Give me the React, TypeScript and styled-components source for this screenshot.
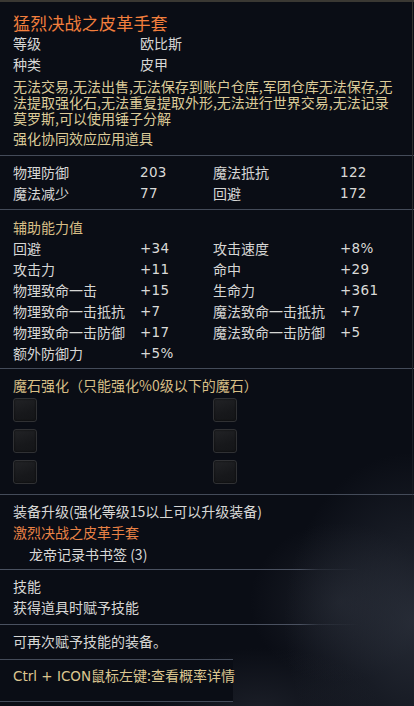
import React from "react";
import styled, { createGlobalStyle } from "styled-components";

const GlobalStyle = createGlobalStyle`
  html, body {
    margin: 0;
    padding: 0;
    background: #0b0e16;
  }
  body {
    width: 414px;
    height: 706px;
    overflow: hidden;
    font-family: "Noto Sans CJK SC", "DejaVu Sans", sans-serif;
    -webkit-font-smoothing: antialiased;
  }
`;

const Frame = styled.div`
  position: relative;
  width: 414px;
  height: 706px;
  box-sizing: border-box;
  border-top: 2px solid #3a3833;
  background:
    radial-gradient(ellipse 130px 170px at 414px 620px, rgba(56, 62, 74, 0.6), rgba(56, 62, 74, 0) 100%),
    radial-gradient(ellipse 90px 80px at 340px 600px, rgba(40, 44, 54, 0.55), rgba(40, 44, 54, 0) 100%),
    radial-gradient(ellipse 120px 60px at 260px 706px, rgba(42, 46, 56, 0.5), rgba(42, 46, 56, 0) 100%),
    #0a0d15;
  display: flex;
  flex-direction: column;
  overflow: hidden;
`;

const RightEdge = styled.div`
  position: absolute;
  top: 0;
  right: 1px;
  width: 1px;
  height: 560px;
  background: linear-gradient(#34332f, #22252c 70%, rgba(34, 37, 44, 0));
`;

const Section = styled.section<{ $pt: number; $pb: number }>`
  padding: ${(p) => p.$pt}px 13px ${(p) => p.$pb}px 13px;
  box-sizing: border-box;
  display: flex;
  flex-direction: column;
`;

const Divider = styled.div<{ $fade?: boolean }>`
  height: 1px;
  flex: none;
  width: 100%;
  background: ${(p) =>
    p.$fade
      ? "linear-gradient(90deg, #4a5160 0px, #4a5160 300px, rgba(74,81,96,0.35) 318px, rgba(74,81,96,0) 360px)"
      : "#444b59"};
`;

const Title = styled.div`
  font-size: 17px;
  line-height: 21px;
  color: #f27f3d;
  letter-spacing: 0.2px;
  white-space: nowrap;
`;

const Line = styled.div<{ $color?: string; $indent?: number; $mt?: number }>`
  font-size: 14px;
  line-height: 21px;
  color: ${(p) => p.$color || "#d7d7d5"};
  padding-left: ${(p) => p.$indent || 0}px;
  margin-top: ${(p) => p.$mt || 0}px;
  white-space: nowrap;
`;

const DescBlock = styled.div`
  margin-top: 3px;
  display: flex;
  flex-direction: column;
`;

const Desc = styled.div`
  font-size: 14px;
  line-height: 16px;
  color: #dccb98;
  white-space: nowrap;
`;

const InfoGrid = styled.div`
  display: grid;
  grid-template-columns: 127px 1fr;
  font-size: 14px;
  line-height: 21px;
  color: #d7d7d5;
`;

const StatGrid = styled.div`
  display: grid;
  grid-template-columns: 127px 73px 127px 1fr;
  font-size: 14px;
  line-height: 21px;
  color: #d7d7d5;
`;

const Label = styled.span`
  white-space: nowrap;
`;

const Num = styled.span`
  font-family: "DejaVu Sans", "Noto Sans CJK SC", sans-serif;
  font-size: 13.5px;
  letter-spacing: 0.3px;
  color: #dadad8;
`;

const Heading = styled.div`
  font-size: 14px;
  line-height: 21px;
  color: #d8bf86;
  white-space: nowrap;
`;

const SlotGrid = styled.div`
  margin-top: 2px;
  display: grid;
  grid-template-columns: 200px 24px;
  row-gap: 7px;
`;

const Slot = styled.div`
  width: 24px;
  height: 24px;
  box-sizing: border-box;
  border-radius: 3px;
  border: 1px solid #303134;
  background: linear-gradient(160deg, #222326 0%, #17181b 60%, #141518 100%);
  box-shadow: inset 0 0 2px rgba(0, 0, 0, 0.8);
`;

const Hint = styled.div`
  font-size: 14px;
  line-height: 21px;
  color: #dcc690;
  white-space: nowrap;
`;

const Latin = styled.span`
  font-family: "DejaVu Sans", "Noto Sans CJK SC", sans-serif;
  font-size: 13.5px;
`;

const HintBox = styled.div`
  width: 233px;
  background: #0a0d15;
  display: flex;
  flex-direction: column;
`;

const stats1: [string, string, string, string][] = [
  ["物理防御", "203", "魔法抵抗", "122"],
  ["魔法减少", "77", "回避", "172"],
];

const stats2: [string, string, string?, string?][] = [
  ["回避", "+34", "攻击速度", "+8%"],
  ["攻击力", "+11", "命中", "+29"],
  ["物理致命一击", "+15", "生命力", "+361"],
  ["物理致命一击抵抗", "+7", "魔法致命一击抵抗", "+7"],
  ["物理致命一击防御", "+17", "魔法致命一击防御", "+5"],
  ["额外防御力", "+5%"],
];

const descLines = [
  "无法交易,无法出售,无法保存到账户仓库,军团仓库无法保存,无",
  "法提取强化石,无法重复提取外形,无法进行世界交易,无法记录",
  "莫罗斯,可以使用锤子分解",
];

export default function App() {
  return (
    <>
      <GlobalStyle />
      <Frame>
        <RightEdge />
        <Section $pt={10} $pb={6}>
          <Title>猛烈决战之皮革手套</Title>
          <InfoGrid>
            <Label>等级</Label>
            <Label>欧比斯</Label>
            <Label>种类</Label>
            <Label>皮甲</Label>
          </InfoGrid>
          <DescBlock>
            {descLines.map((l) => (
              <Desc key={l}>{l}</Desc>
            ))}
          </DescBlock>
          <Line $color="#dccb98" $mt={2}>强化协同效应应用道具</Line>
        </Section>
        <Divider />
        <Section $pt={6} $pb={5}>
          <StatGrid>
            {stats1.map((r) => (
              <React.Fragment key={r[0]}>
                <Label>{r[0]}</Label>
                <Num>{r[1]}</Num>
                <Label>{r[2]}</Label>
                <Num>{r[3]}</Num>
              </React.Fragment>
            ))}
          </StatGrid>
        </Section>
        <Divider />
        <Section $pt={7} $pb={4}>
          <Heading>辅助能力值</Heading>
          <StatGrid>
            {stats2.map((r) => (
              <React.Fragment key={r[0]}>
                <Label>{r[0]}</Label>
                <Num>{r[1]}</Num>
                {r[2] ? <Label>{r[2]}</Label> : null}
                {r[3] ? <Num>{r[3]}</Num> : null}
              </React.Fragment>
            ))}
          </StatGrid>
        </Section>
        <Divider />
        <Section $pt={6} $pb={10}>
          <Heading>魔石强化（只能强化%0级以下的魔石）</Heading>
          <SlotGrid>
            {Array.from({ length: 6 }).map((_, i) => (
              <Slot key={i} />
            ))}
          </SlotGrid>
        </Section>
        <Divider />
        <Section $pt={6} $pb={4}>
          <Line>装备升级(强化等级15以上可以升级装备)</Line>
          <Line $color="#e98246">激烈决战之皮革手套</Line>
          <Line $indent={16} $mt={1}>龙帝记录书书签 (3)</Line>
        </Section>
        <Divider $fade />
        <Section $pt={6} $pb={6}>
          <Line>技能</Line>
          <Line>获得道具时赋予技能</Line>
        </Section>
        <Divider $fade />
        <Section $pt={6} $pb={7}>
          <Line>可再次赋予技能的装备。</Line>
        </Section>
        <HintBox>
          <Divider />
          <Section $pt={5} $pb={14}>
            <Hint>
              <Latin>Ctrl + ICON</Latin>鼠标左键:查看概率详情
            </Hint>
          </Section>
          <Divider />
        </HintBox>
      </Frame>
    </>
  );
}
